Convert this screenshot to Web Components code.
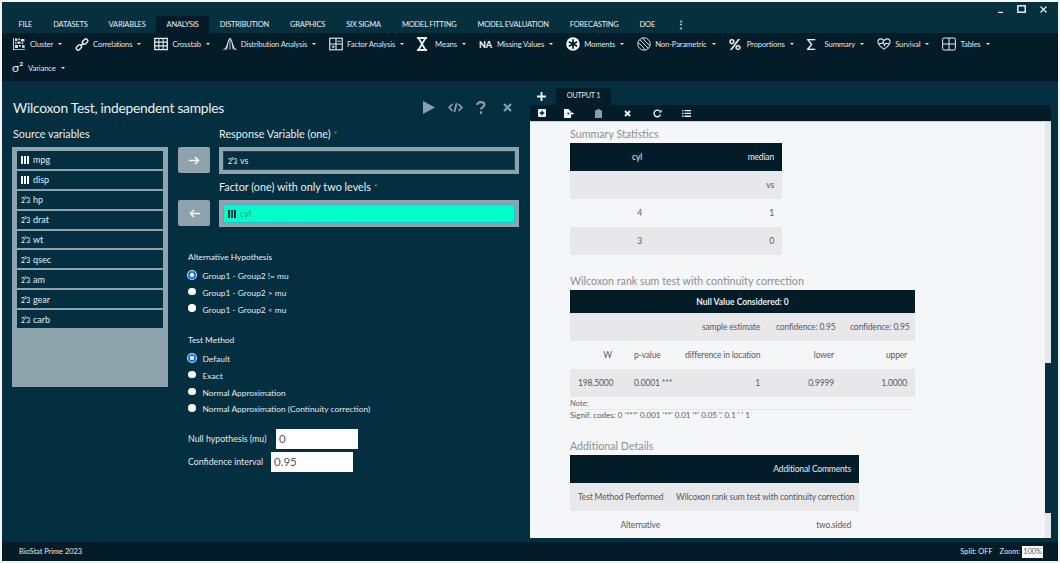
<!DOCTYPE html>
<html>
<head>
<meta charset="utf-8">
<title>BioStat Prime</title>
<style>
    html, body { margin: 0; height: 100%; background: #f2f4f5; overflow: hidden; }
    body { font-family: Lato, "Liberation Sans", sans-serif; }
</style>
</head>
<body>
<bs-app></bs-app>

<script>
// small icon set used by the ribbon and the panels
const icons = {
    cluster: '<svg width="14" height="14" viewBox="0 0 14 14" fill="#dfe6e8"><path d="M1 1h.9v11.2H13v.9H1z"/><rect x="3" y="1.5" width="2.4" height="2.4"/><rect x="6.3" y="1.5" width="1.6" height="1.6"/><rect x="9" y="2" width="3.4" height="2.4"/><rect x="3" y="5" width="1.6" height="1.6"/><rect x="5.5" y="4.5" width="3" height="2.2"/><rect x="9.6" y="5.4" width="1.6" height="1.6"/><rect x="3" y="8" width="3" height="3"/><rect x="7" y="8" width="1.8" height="1.8"/><rect x="10" y="8.2" width="2.6" height="2.6"/></svg>',
    link: '<svg width="15" height="15" viewBox="0 0 15 15" fill="none" stroke="#e6ecee" stroke-width="1.5"><rect x="1" y="8.6" width="6.4" height="4" rx="2" transform="rotate(-45 4.2 10.6)"/><rect x="7.6" y="2.4" width="6.4" height="4" rx="2" transform="rotate(-45 10.8 4.4)"/><path d="M5.8 9.2l3.4-3.4"/></svg>',
    grid: '<svg width="15" height="14" viewBox="0 0 15 14" fill="none" stroke="#e6ecee" stroke-width="1.1"><rect x=".8" y="1" width="13.4" height="12" stroke-width="1.4"/><path d="M5.2 1v12M9.8 1v12M1 5h13M1 9h13"/></svg>',
    curve: '<svg width="15" height="14" viewBox="0 0 15 14" fill="none" stroke="#e6ecee" stroke-width="1.1"><path d="M.5 13c3 0 3.500-2.500 4.500-6.500S6.500 1 7.500 1 9 2.500 10 6.500 11.500 13 14.500 13"/><path d="M7.500 1v12M5 7l-1 6M10 7l1 6" stroke-width=".9"/></svg>',
    factor: '<svg width="15" height="14" viewBox="0 0 15 14" fill="none" stroke="#e6ecee" stroke-width="1.2"><rect x=".8" y=".8" width="13.400" height="12.400"/><path d="M7.500 1v12M1 7h13"/><path d="M3 10h3M4.500 8.500v3M9 4h3.500" stroke-width="1"/></svg>',
    means: '<svg width="10" height="14" viewBox="0 0 10 14" fill="#f0f4f5"><path d="M0 0h10v2H0zM0 12h10v2H0z"/><path d="M1 2h2l2 3.300L7 2h2L6 7l3 5H7L5 8.700 3 12H1l3-5z"/></svg>',
    moments: '<svg width="14" height="14" viewBox="0 0 14 14"><circle cx="7" cy="7" r="6.800" fill="#f0f4f5"/><path d="M7 2.300v9.400M2.900 4.700l8.200 4.600M11.100 4.700l-8.200 4.600" stroke="#041c28" stroke-width="1.700"/></svg>',
    nonpar: '<svg width="14" height="14" viewBox="0 0 14 14" fill="none" stroke="#dfe6e8" stroke-width="1"><circle cx="7" cy="7" r="6.200"/><path d="M2.800 2.600l8.600 8.800M1.500 5.500l6.800 7.200M5.400 1.300l7.200 7.300"/></svg>',
    heart: '<svg width="15" height="14" viewBox="0 0 15 14" fill="none" stroke="#e6ecee" stroke-width="1.100"><path d="M7.500 12.500C3 9.500 1 7.500 1 4.800 1 2.800 2.500 1.500 4.200 1.500c1.400 0 2.500.7 3.300 2 .8-1.300 1.900-2 3.300-2C12.500 1.500 14 2.800 14 4.800c0 2.700-2 4.700-6.500 7.700z"/><path d="M2 6.500h3.500l1-2 1.500 4 1-2h4"/></svg>',
    table: '<svg width="14" height="14" viewBox="0 0 14 14" fill="none" stroke="#e6ecee" stroke-width="1"><rect x=".6" y="1" width="12.800" height="12" rx="1.200"/><path d="M7 1v12M1 7h12"/></svg>',
    play: '<svg width="14" height="13" viewBox="0 0 14 13" fill="#8a9ea7"><path d="M1 0l12 6.500L1 13z"/></svg>',
    code: '<svg width="15" height="11" viewBox="0 0 15 11" fill="none" stroke="#8a9ea7" stroke-width="1.800"><path d="M4.500 2L1.200 5.500 4.500 9M10.500 2l3.300 3.500L10.500 9M8.600 1L6.400 10"/></svg>',
    help: '<svg width="10" height="13" viewBox="0 0 10 13" fill="none" stroke="#8a9ea7" stroke-width="2.200"><path d="M1.300 4c0-1.800 1.500-2.900 3.500-2.900S8.500 2.200 8.500 3.800C8.500 6 5 6 5 8.500"/><path d="M5 10.300v2.600"/></svg>',
    close: '<svg width="9" height="9" viewBox="0 0 9 9" stroke="#8a9ea7" stroke-width="2.200"><path d="M1 1l7 7M8 1L1 8"/></svg>',
    newtab: '<svg width="8" height="8" viewBox="0 0 8 8"><rect width="8" height="8" rx="1" fill="#f0f4f5"/><path d="M4 1.800v4.400M1.800 4h4.400" stroke="#041c28" stroke-width="1.300"/></svg>',
    exportdoc: '<svg width="10" height="9" viewBox="0 0 10 9" fill="#f0f4f5"><path d="M0 0h4.500L7 2.500V3.800H3.500v1.500H7V9H0z"/><path d="M5 4h2.500V2.800L10 4.500 7.500 6.200V5H5z"/></svg>',
    clip: '<svg width="7" height="9" viewBox="0 0 7 9" fill="#8a9ea7"><path d="M0 1.200h2V.3h3v.9h2V9H0z"/></svg>',
    x: '<svg width="7" height="7" viewBox="0 0 7 7" stroke="#f0f4f5" stroke-width="1.800"><path d="M1 1l5 5M6 1L1 6"/></svg>',
    redo: '<svg width="9" height="9" viewBox="0 0 9 9" fill="none" stroke="#f0f4f5" stroke-width="1.400"><path d="M7.400 5.600A3.300 3.300 0 1 1 6.600 2"/><path d="M8.600.5v3H5.800z" fill="#f0f4f5" stroke="none"/></svg>',
    list: '<svg width="9" height="7" viewBox="0 0 9 7" fill="#f0f4f5"><path d="M0 0h1.500v1.300H0zM2.500 0H9v1.300H2.500zM0 2.800h1.500v1.300H0zM2.500 2.800H9v1.300H2.500zM0 5.600h1.500v1.300H0zM2.500 5.600H9v1.300H2.500z"/></svg>',
    bars: '<svg width="8" height="8" viewBox="0 0 8 8" fill="currentColor"><path d="M0 0h2v8H0zM3 0h2v8H3zM6 0h2v8H6z"/></svg>'
};

class BsMenu extends HTMLElement {
    constructor() {
        super();
        const items = ["FILE", "DATASETS", "VARIABLES", "ANALYSIS", "DISTRIBUTION", "GRAPHICS", "SIX SIGMA", "MODEL FITTING", "MODEL EVALUATION", "FORECASTING", "DOE"];
        this.attachShadow({ mode: "open" }).innerHTML = `
<style>
    :host { display: block; height: 31px; background: #07303f; color: #e8eef0; font-size: 7.500px; letter-spacing: -.2px; }
    #controls { display: flex; justify-content: flex-end; align-items: center; gap: 14px; height: 14px; padding-right: 11px; }
    #tabs { display: flex; height: 17px; padding-left: 6px; align-items: stretch; }
    .tab { padding: 0 10.5px; line-height: 18px; white-space: nowrap; }
    .tab.active { background: #041c28; border-radius: 3px 3px 0 0; }
    .more { margin-left: 10px; line-height: 17px; font-weight: 700; font-size: 10px; }
</style>
<div id="controls">
    <svg width="5" height="8" viewBox="0 0 5 8"><path d="M0 6.800h5V8H0z" fill="#e8eef0"/></svg>
    <svg width="9" height="8" viewBox="0 0 9 8" fill="none" stroke="#e8eef0" stroke-width="1.500"><rect x=".8" y=".8" width="7.400" height="6.400"/></svg>
    <svg width="7" height="7" viewBox="0 0 7 7" stroke="#e8eef0" stroke-width="1.200"><path d="M.5.500l6 6M6.500.500l-6 6"/></svg>
</div>
<div id="tabs">
    ${items.map(t => `<div class="tab ${t === "ANALYSIS" ? "active" : ""}">${t}</div>`).join("")}
    <div class="more">⋮</div>
</div>`;
    }
}
customElements.define("bs-menu", BsMenu);

class BsTool extends HTMLElement {
    constructor() {
        super();
        const icon = this.getAttribute("icon");
        const glyph = this.getAttribute("glyph");
        this.attachShadow({ mode: "open" }).innerHTML = `
<style>
    :host { display: inline-flex; align-items: center; height: 22px; color: #dfe6e8; font-size: 7.700px; letter-spacing: -.15px; white-space: nowrap; }
    .icon { display: flex; align-items: center; width: var(--icon-width, 14px); margin-right: 4px; color: #f0f4f5; letter-spacing: 0; }
    .glyph { font-size: var(--glyph-size, 15px); line-height: 1; font-weight: var(--glyph-weight, 400); }
    .caret { width: 0; height: 0; border: 2.200px solid transparent; border-top: 2.500px solid #e8eef0; border-bottom: 0; margin-left: 5px; }
</style>
<span class="icon">${icon ? icons[icon] : `<span class="glyph">${glyph}</span>`}</span>
<slot></slot>
<span class="caret"></span>`;
    }
}
customElements.define("bs-tool", BsTool);

class BsRibbon extends HTMLElement {
    constructor() {
        super();
        this.attachShadow({ mode: "open" }).innerHTML = `
<style>
    :host { display: flex; flex-wrap: wrap; align-content: flex-start; column-gap: 13px; row-gap: 2px; background: #041c28; height: 48px; padding: 0 50px 0 10px; box-sizing: border-box; }
</style>
<slot></slot>`;
    }
}
customElements.define("bs-ribbon", BsRibbon);

class BsVar extends HTMLElement {
    constructor() {
        super();
        const numeric = this.getAttribute("kind") === "num";
        this.attachShadow({ mode: "open" }).innerHTML = `
<style>
    :host { display: flex; align-items: center; gap: 3px; height: 19.900px; box-sizing: border-box; border: 1px solid #8fa3ac; border-top-width: .5px; border-bottom-width: .5px; padding-left: 4px; background: #042f40; color: var(--var-color, #e6ecee); font-size: 9px; }
    .bars { color: var(--bars-color, #fff); display: flex; margin-right: 1px; }
    .num { font-size: 6.800px; letter-spacing: -.6px; color: var(--bars-color, #fff); line-height: 1; white-space: nowrap; width: 9px; padding-top: 2px; }
    .num sup { font-size: 4.500px; line-height: 0; vertical-align: 4px; }
</style>
${numeric ? `<span class="num">2<sup>1</sup>3</span>` : `<span class="bars">${icons.bars}</span>`}
<slot></slot>`;
    }
}
customElements.define("bs-var", BsVar);

class BsTarget extends HTMLElement {
    constructor() {
        super();
        this.attachShadow({ mode: "open" }).innerHTML = `
<style>
    :host { display: block; }
    #label { height: 22px; line-height: 18px; padding-left: 41px; color: #e8eef0; font-size: 10.800px; box-sizing: border-box; }
    #label b { color: #e2553f; font-weight: 400; font-size: 9px; }
    #row { display: flex; gap: 9px; height: 27px; }
    button { width: 32px; height: 26px; background: #8fa3ac; border: 0; border-radius: 2px; padding: 0; display: flex; align-items: center; justify-content: center; }
    #box { width: 300px; box-sizing: border-box; border: 4px solid #8fa3ac; display: flex; }
    ::slotted(bs-var) { flex: 1; height: auto; border: 1px solid var(--inner-border, #1d4655); }
</style>
<div id="label">${this.getAttribute("label")} <b>*</b></div>
<div id="row">
    <button><svg width="11" height="9" viewBox="0 0 11 9" fill="none" stroke="#f4f7f8" stroke-width="1.500">${this.getAttribute("dir") === "left" ? '<path d="M11 4.500H1.500M5 1L1.500 4.500 5 8"/>' : '<path d="M0 4.500h9.500M6 1l3.500 3.500L6 8"/>'}</svg></button>
    <div id="box"><slot></slot></div>
</div>`;
    }
}
customElements.define("bs-target", BsTarget);

class BsRadio extends HTMLElement {
    constructor() {
        super();
        const on = this.hasAttribute("checked");
        this.attachShadow({ mode: "open" }).innerHTML = `
<style>
    :host { display: flex; align-items: center; height: 16.700px; color: #e3e9eb; font-size: 8.400px; white-space: nowrap; }
    i { width: 7.500px; height: 7.500px; border-radius: 50%; background: #fff; margin: 0 7px 3px 0; box-sizing: border-box; flex: none; ${on ? "border: 2px solid #1a73e8; box-shadow: 0 0 0 1px #bcd6f5;" : ""} }
</style>
<i></i><slot></slot>`;
    }
}
customElements.define("bs-radio", BsRadio);

class BsField extends HTMLElement {
    constructor() {
        super();
        this.attachShadow({ mode: "open" }).innerHTML = `
<style>
    :host { display: flex; align-items: center; color: #e3e9eb; font-size: 8.800px; white-space: nowrap; height: 20px; }
    span { width: var(--label-width); }
    input { width: 82px; height: 20px; box-sizing: border-box; border: 0; padding: 0 3px; font: 11.500px Lato, sans-serif; color: #555; background: #fff; }
</style>
<span><slot></slot></span>
<input value="${this.getAttribute("value")}">`;
    }
}
customElements.define("bs-field", BsField);

class BsWizard extends HTMLElement {
    constructor() {
        super();
        this.attachShadow({ mode: "open" }).innerHTML = `
<style>
    :host { display: block; height: 100%; padding: 0 0 0 10px; box-sizing: border-box; color: #e8eef0; }
    header { display: flex; align-items: center; height: 44px; padding-top: 8px; box-sizing: border-box; }
    h1 { flex: 1; margin: 0 0 0 1px; font-size: 13.800px; letter-spacing: -.25px; font-weight: 400; color: #e9eff1; }
    .acts { display: flex; align-items: center; padding-right: 10px; }
    .acts span { width: 26px; display: flex; justify-content: center; }
    #body { display: flex; }
    #source { width: 156px; }
    #source h2 { margin: 0 0 0 1px; height: 22px; line-height: 18px; font-size: 10.800px; font-weight: 400; }
    #list { background: #8fa3ac; height: 240px; box-sizing: border-box; padding: 3px 4px; }
    #right { margin-left: 10px; }
    .opts { padding-left: 10px; }
    .opts h3 { margin: 0 0 2px; font-size: 8.400px; font-weight: 400; height: 17px; line-height: 17px; }
    #alt { margin-top: 22px; }
    #method { margin-top: 14px; }
    #nulls { margin-top: 11px; display: flex; flex-direction: column; gap: 3px; }
    ::slotted([slot="targets"]:last-of-type) { margin-top: 4px; }
</style>
<header>
    <h1>Wilcoxon Test, independent samples</h1>
    <div class="acts"><span>${icons.play}</span><span>${icons.code}</span><span>${icons.help}</span><span>${icons.close}</span></div>
</header>
<div id="body">
    <div id="source">
        <h2>Source variables</h2>
        <div id="list"><slot name="source"></slot></div>
    </div>
    <div id="right">
        <slot name="targets"></slot>
        <div class="opts">
            <div id="alt"><h3>Alternative Hypothesis</h3><slot name="alt"></slot></div>
            <div id="method"><h3>Test Method</h3><slot name="method"></slot></div>
            <div id="nulls"><slot name="nulls"></slot></div>
        </div>
    </div>
</div>`;
    }
}
customElements.define("bs-wizard", BsWizard);

class BsTable extends HTMLElement {
    constructor() {
        super();
        const cols = this.getAttribute("cols").split(",");
        const rows = JSON.parse(this.getAttribute("rows"));
        this.attachShadow({ mode: "open" }).innerHTML = `
<style>
    :host { display: block; width: ${this.getAttribute("width")}px; font-size: 8.500px; letter-spacing: -.15px; color: #555b60; }
    h4 { margin: 0; height: 18px; font-size: 10.700px; letter-spacing: 0; font-weight: 400; color: #8b8f96; line-height: 18px; }
    table { border-collapse: collapse; width: 100%; table-layout: fixed; }
    td { height: 28px; padding: 0 8px; text-align: right; white-space: nowrap; }
    td.l { text-align: left; padding-left: 14px; }
    tr.h td { background: #041c28; color: #e8eef0; }
    tr.span td { background: #041c28; color: #e8eef0; text-align: center; height: 23px; font-weight: 700; letter-spacing: 0; }
    tr.odd td { background: #e8e8ea; }
</style>
<h4>${this.getAttribute("heading")}</h4>
<table>
    <colgroup>${cols.map(w => `<col style="width:${w}px">`).join("")}</colgroup>
    ${rows.map(r => r.span
        ? `<tr class="span"><td colspan="${cols.length}">${r.span}</td></tr>`
        : `<tr class="${r.cls || ""}">${r.cells.map((c, i) => `<td class="${(r.left || []).includes(i) ? "l" : ""}">${c}</td>`).join("")}</tr>`).join("")}
</table>
<slot></slot>`;
    }
}
customElements.define("bs-table", BsTable);

class BsOutput extends HTMLElement {
    constructor() {
        super();
        this.attachShadow({ mode: "open" }).innerHTML = `
<style>
    :host { display: flex; flex-direction: column; height: 100%; color: #e8eef0; }
    #strip { display: flex; height: 24px; align-items: flex-end; }
    #plus { width: 22px; height: 100%; display: flex; align-items: center; justify-content: center; padding-top: 6px; box-sizing: border-box; }
    #tab { width: 55px; height: 17px; margin-left: 4px; line-height: 16px; background: #041c28; border-radius: 3px 3px 0 0; text-align: center; font-size: 7.200px; letter-spacing: -.2px; }
    #tools { display: flex; align-items: center; height: 16px; background: #041c28; margin-right: 7px; border-radius: 0 3px 0 0; }
    #tools span { width: 29.500px; display: flex; justify-content: center; }
    #tools span:first-child { width: 24px; }
    #view { flex: 1; display: flex; margin: 0 7px 4px 0; min-height: 0; background: #f5f6f8; border-top: 1px solid #c9d2d6; overflow: hidden; }
    #page { flex: 1; padding: 3px 0 0 40px; box-sizing: border-box; overflow: hidden; display: flex; flex-direction: column; }
    #bar { width: 6px; background: #e6e7e8; display: flex; flex-direction: column; }
    #bar i { height: 150px; background: #042f40; margin-top: auto; margin-bottom: 25px; }
</style>
<div id="strip">
    <div id="plus"><svg width="9" height="9" viewBox="0 0 9 9" stroke="#f4f7f8" stroke-width="1.800"><path d="M4.500 0v9M0 4.500h9"/></svg></div>
    <div id="tab">OUTPUT 1</div>
</div>
<div id="tools"><span>${icons.newtab}</span><span>${icons.exportdoc}</span><span>${icons.clip}</span><span>${icons.x}</span><span>${icons.redo}</span><span>${icons.list}</span></div>
<div id="view">
    <div id="page"><slot></slot></div>
    <div id="bar"><i></i></div>
</div>`;
    }
}
customElements.define("bs-output", BsOutput);

class BsStatus extends HTMLElement {
    constructor() {
        super();
        this.attachShadow({ mode: "open" }).innerHTML = `
<style>
    :host { display: flex; align-items: center; height: 19px; background: #041c28; color: #e3e9eb; font-size: 7.400px; padding: 0 15px 0 17px; }
    span { flex: 1; }
    em { font-style: normal; margin-left: 7px; }
    b { font-weight: 400; background: #fff; color: #555; margin-left: 2px; padding: 1px 1px; line-height: 10px; }
</style>
<span>BioStat Prime 2023</span>
<em>Split: OFF</em><em>Zoom:</em><b>100%</b>`;
    }
}
customElements.define("bs-status", BsStatus);

class BsNote extends HTMLElement {
    constructor() {
        super();
        this.attachShadow({ mode: "open" }).innerHTML = `
<style>
    :host { display: block; width: 345px; font-size: 8px; color: #555b60; }
    i { display: block; height: 12px; line-height: 12px; border-bottom: 1px solid #e6e7e8; }
    div { height: 11px; line-height: 11px; white-space: nowrap; }
</style>
<i>Note:</i>
<div>Signif. codes: 0 '***' 0.001 '**' 0.01 '*' 0.05 '.' 0.1 ' ' 1</div>`;
    }
}
customElements.define("bs-note", BsNote);

class BsApp extends HTMLElement {
    constructor() {
        super();
        this.attachShadow({ mode: "open" }).innerHTML = `
<style>
    :host { display: flex; flex-direction: column; width: 1056px; height: 559px; margin: 2px; background: #042f40; }
    #main { flex: 1; display: grid; grid-template-columns: 528px 528px; min-height: 0; }
    #left, #right { min-height: 0; }
</style>
<slot name="menu"></slot>
<slot name="ribbon"></slot>
<div id="main">
    <div id="left"><slot name="left"></slot></div>
    <div id="right"><slot name="right"></slot></div>
</div>
<slot name="status"></slot>`;
        this.innerHTML = `
<bs-menu slot="menu"></bs-menu>
<bs-ribbon slot="ribbon">
    <bs-tool icon="cluster">Cluster</bs-tool>
    <bs-tool icon="link">Correlations</bs-tool>
    <bs-tool icon="grid">Crosstab</bs-tool>
    <bs-tool icon="curve">Distribution Analysis</bs-tool>
    <bs-tool icon="factor">Factor Analysis</bs-tool>
    <bs-tool icon="means">Means</bs-tool>
    <bs-tool glyph="NA" style="--glyph-size:9px;--glyph-weight:900">Missing Values</bs-tool>
    <bs-tool icon="moments">Moments</bs-tool>
    <bs-tool icon="nonpar">Non-Parametric</bs-tool>
    <bs-tool glyph="%" style="--glyph-weight:700">Proportions</bs-tool>
    <bs-tool glyph="Σ">Summary</bs-tool>
    <bs-tool icon="heart">Survival</bs-tool>
    <bs-tool icon="table">Tables</bs-tool>
    <bs-tool glyph="σ²" style="--glyph-size:12px;--icon-width:12px">Variance</bs-tool>
</bs-ribbon>
<bs-wizard slot="left">
    <bs-var slot="source">mpg</bs-var>
    <bs-var slot="source">disp</bs-var>
    <bs-var slot="source" kind="num">hp</bs-var>
    <bs-var slot="source" kind="num">drat</bs-var>
    <bs-var slot="source" kind="num">wt</bs-var>
    <bs-var slot="source" kind="num">qsec</bs-var>
    <bs-var slot="source" kind="num">am</bs-var>
    <bs-var slot="source" kind="num">gear</bs-var>
    <bs-var slot="source" kind="num">carb</bs-var>
    <bs-target slot="targets" label="Response Variable (one)" dir="right"><bs-var kind="num">vs</bs-var></bs-target>
    <bs-target slot="targets" label="Factor (one) with only two levels" dir="left"><bs-var style="background:#00ffc8;--var-color:#2f9c8e;--bars-color:#07303f;--inner-border:#39b7c9">cyl</bs-var></bs-target>
    <bs-radio slot="alt" checked>Group1 - Group2 != mu</bs-radio>
    <bs-radio slot="alt">Group1 - Group2 &gt; mu</bs-radio>
    <bs-radio slot="alt">Group1 - Group2 &lt; mu</bs-radio>
    <bs-radio slot="method" checked>Default</bs-radio>
    <bs-radio slot="method">Exact</bs-radio>
    <bs-radio slot="method">Normal Approximation</bs-radio>
    <bs-radio slot="method">Normal Approximation (Continuity correction)</bs-radio>
    <bs-field slot="nulls" value="0" style="--label-width:88px">Null hypothesis (mu)</bs-field>
    <bs-field slot="nulls" value="0.95" style="--label-width:83px">Confidence interval</bs-field>
</bs-wizard>
<bs-output slot="right">
    <bs-table heading="Summary Statistics" width="212" cols="80,132" rows='${JSON.stringify([
        { cls: "h", cells: ["cyl", "median"] },
        { cls: "odd", cells: ["", "vs"] },
        { cells: ["4", "1"] },
        { cls: "odd", cells: ["3", "0"] }
    ])}'></bs-table>
    <bs-table style="margin-top:17px" heading="Wilcoxon rank sum test with continuity correction" width="345" cols="50,57,91,74,73" rows='${JSON.stringify([
        { span: "Null Value Considered: 0" },
        { cls: "odd", cells: ["", "", "sample estimate", "confidence: 0.95", "confidence: 0.95"] },
        { cells: ["W", "p-value", "difference in location", "lower", "upper"], left: [1] },
        { cls: "odd", cells: ["198.5000", "0.0001 ***", "1", "0.9999", "1.0000"], left: [1] }
    ])}'></bs-table>
    <bs-note></bs-note>
    <bs-table style="margin-top:16px" heading="Additional Details" width="289" cols="98,191" rows='${JSON.stringify([
        { cls: "h", cells: ["", "Additional Comments"] },
        { cls: "odd", cells: ["Test Method Performed", "Wilcoxon rank sum test with continuity correction"] },
        { cells: ["Alternative", "two.sided"] }
    ])}'></bs-table>
</bs-output>
<bs-status slot="status"></bs-status>`;
    }
}
customElements.define("bs-app", BsApp);
</script>
</body>
</html>
